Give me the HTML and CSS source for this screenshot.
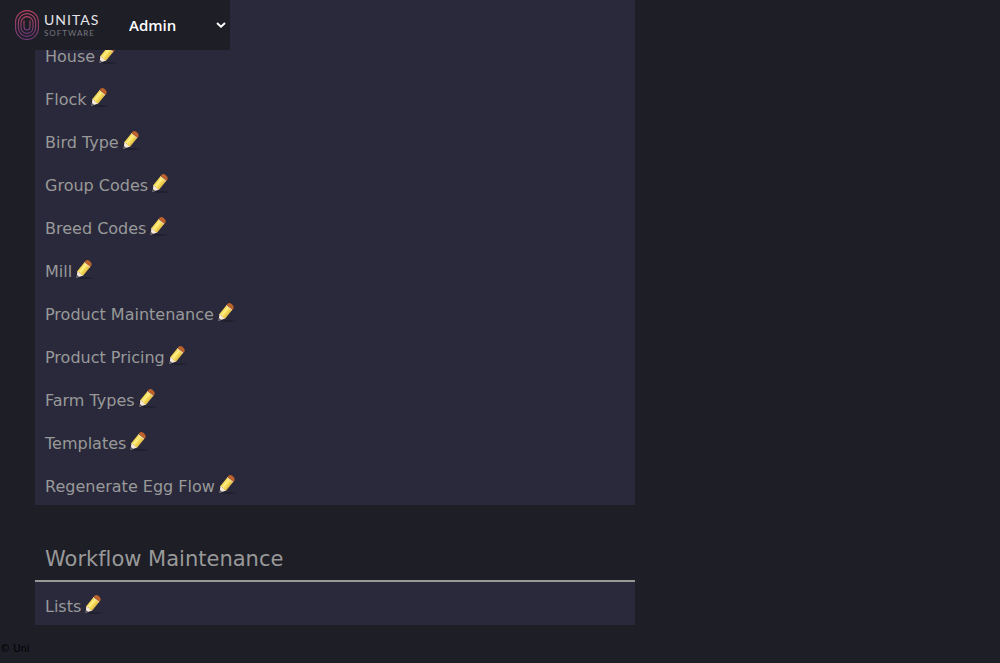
FILE: index.html
```
<!DOCTYPE html>
<html lang="en">
<head>
<meta charset="utf-8">
<meta name="viewport" content="width=device-width, initial-scale=1">
<title>Unitas Software - Admin</title>
<link rel="stylesheet" href="styles.css">
</head>
<body>
<svg class="defs" aria-hidden="true">
  <defs>
    <linearGradient id="wood" x1="0" y1="0" x2="1" y2="0">
      <stop offset="0" stop-color="#efcf45"/><stop offset=".35" stop-color="#fff08a"/><stop offset=".6" stop-color="#f5dc55"/><stop offset="1" stop-color="#dfb848"/>
    </linearGradient>
    <symbol id="pencil" viewBox="0 0 20 20">
      <ellipse cx="10.5" cy="19" rx="8" ry=".8" fill="#1d1d2b"/>
      <g transform="translate(1.6 18.8) rotate(39)">
        <path d="M0 0 L-3.7 -6 L3.7 -6 Z" fill="#f8e8da"/>
        <path d="M0 0 L-1.5 -2.4 L1.5 -2.4 Z" fill="#55565c"/>
        <path d="M-3.7 -5.2 L-1.2 -6.2 L1.2 -5.2 L3.7 -6 V-17 H-3.7 Z" fill="url(#wood)"/>
        <path d="M-3.7 -16.4 H3.7 V-17.4 H-3.7 Z" fill="#ecd8b4"/>
        <path d="M-3.7 -17.2 V-19.2 Q-3.2 -21.2 0 -21.2 Q3.2 -21.2 3.7 -19.2 V-17.2 Z" fill="#bd622a"/>
      </g>
    </symbol>
  </defs>
</svg>
<header class="topbar">
  <a class="brand" href="#" aria-label="Unitas Software">
    <svg class="brand-mark" viewBox="0 0 24 30" aria-hidden="true">
      <defs>
        <linearGradient id="mark" x1="0" y1="0" x2="0" y2="1">
          <stop offset="0" stop-color="#b84463"/><stop offset="1" stop-color="#713a7c"/>
        </linearGradient>
      </defs>
      <g fill="none" stroke="url(#mark)" stroke-width="1.1">
        <rect x=".6" y=".6" width="22.8" height="28.8" rx="11.4"/>
        <rect x="3.4" y="3.6" width="17.2" height="22.8" rx="8.6"/>
        <rect x="6" y="6.6" width="12" height="16.8" rx="6"/>
        <path d="M9 10.5 V17 A3 3 0 0 0 15 17 V10.5"/>
      </g>
    </svg>
    <span class="brand-text"><span class="brand-name">UNITAS</span><span class="brand-sub">SOFTWARE</span></span>
  </a>
  <select class="section-select" aria-label="Section"><option>Admin</option></select>
  <svg class="chevron" viewBox="0 0 10 6" aria-hidden="true"><path d="M1 1 L5 4.7 L9 1" fill="none" stroke="#fff" stroke-width="2"/></svg>
</header>
<main class="content">
  <ul class="panel panel-first">
    <li><a href="#">House<svg class="pencil"><use href="#pencil"/></svg></a></li>
    <li><a href="#">Flock<svg class="pencil"><use href="#pencil"/></svg></a></li>
    <li><a href="#">Bird Type<svg class="pencil"><use href="#pencil"/></svg></a></li>
    <li><a href="#">Group Codes<svg class="pencil"><use href="#pencil"/></svg></a></li>
    <li><a href="#">Breed Codes<svg class="pencil"><use href="#pencil"/></svg></a></li>
    <li><a href="#">Mill<svg class="pencil"><use href="#pencil"/></svg></a></li>
    <li><a href="#">Product Maintenance<svg class="pencil"><use href="#pencil"/></svg></a></li>
    <li><a href="#">Product Pricing<svg class="pencil"><use href="#pencil"/></svg></a></li>
    <li><a href="#">Farm Types<svg class="pencil"><use href="#pencil"/></svg></a></li>
    <li><a href="#">Templates<svg class="pencil"><use href="#pencil"/></svg></a></li>
    <li><a href="#">Regenerate Egg Flow<svg class="pencil"><use href="#pencil"/></svg></a></li>
  </ul>
  <h2 class="heading">Workflow Maintenance</h2>
  <ul class="panel">
    <li><a href="#">Lists<svg class="pencil"><use href="#pencil"/></svg></a></li>
  </ul>
</main>
<footer class="footer">© Uni</footer>
</body>
</html>
```
FILE: styles.css
```
* { box-sizing: border-box; }
body {
  margin: 0;
  background: #1e1e27;
  color: #999;
  font-family: "DejaVu Sans", Verdana, sans-serif;
  font-size: 16px;
  font-variant-ligatures: none;
}
.defs { position: absolute; width: 0; height: 0; }
.topbar {
  position: fixed;
  top: 0;
  left: 0;
  z-index: 2;
  display: flex;
  align-items: center;
  height: 50px;
  padding: 0 4px 0 15px;
  background: #1e1e27;
}
.brand {
  display: flex;
  align-items: center;
  gap: 5px;
  width: 110px;
  text-decoration: none;
}
.brand-mark { width: 24px; height: 30px; }
.brand-text {
  display: flex;
  flex-direction: column;
  font-family: Lato, sans-serif;
}
.brand-name { color: #e4e4e8; font-size: 14px; line-height: 16px; letter-spacing: 1px; }
.brand-sub { color: #77777f; font-size: 8px; line-height: 10px; letter-spacing: 1px; }
.section-select {
  width: 101px;
  height: 30px;
  margin-right: -10px;
  padding: 0 4px;
  border: 0;
  appearance: none;
  background: transparent;
  color: #fff;
  font: 600 15px "Open Sans", sans-serif;
}
.chevron { width: 10px; height: 6px; pointer-events: none; }
.content { width: 600px; max-width: calc(100% - 35px); margin-left: 35px; }
.panel {
  margin: 0;
  padding: 0;
  list-style: none;
  background: #29293b;
}
.panel-first { padding-top: 32px; }
.panel li { height: 43px; padding: 3px 10px 0; line-height: 43px; }
.panel a {
  display: inline-flex;
  align-items: center;
  gap: 3px;
  color: inherit;
  text-decoration: none;
}
.pencil { width: 20px; height: 20px; margin-bottom: 5px; }
.heading {
  margin: 0;
  padding: 33px 10px 0;
  height: 77px;
  border-bottom: 2px solid #999;
  font-size: 21px;
  font-weight: 400;
  line-height: 43px;
}
.footer { padding-top: 18px; color: #000; font-size: 10px; line-height: 12px; }
```
